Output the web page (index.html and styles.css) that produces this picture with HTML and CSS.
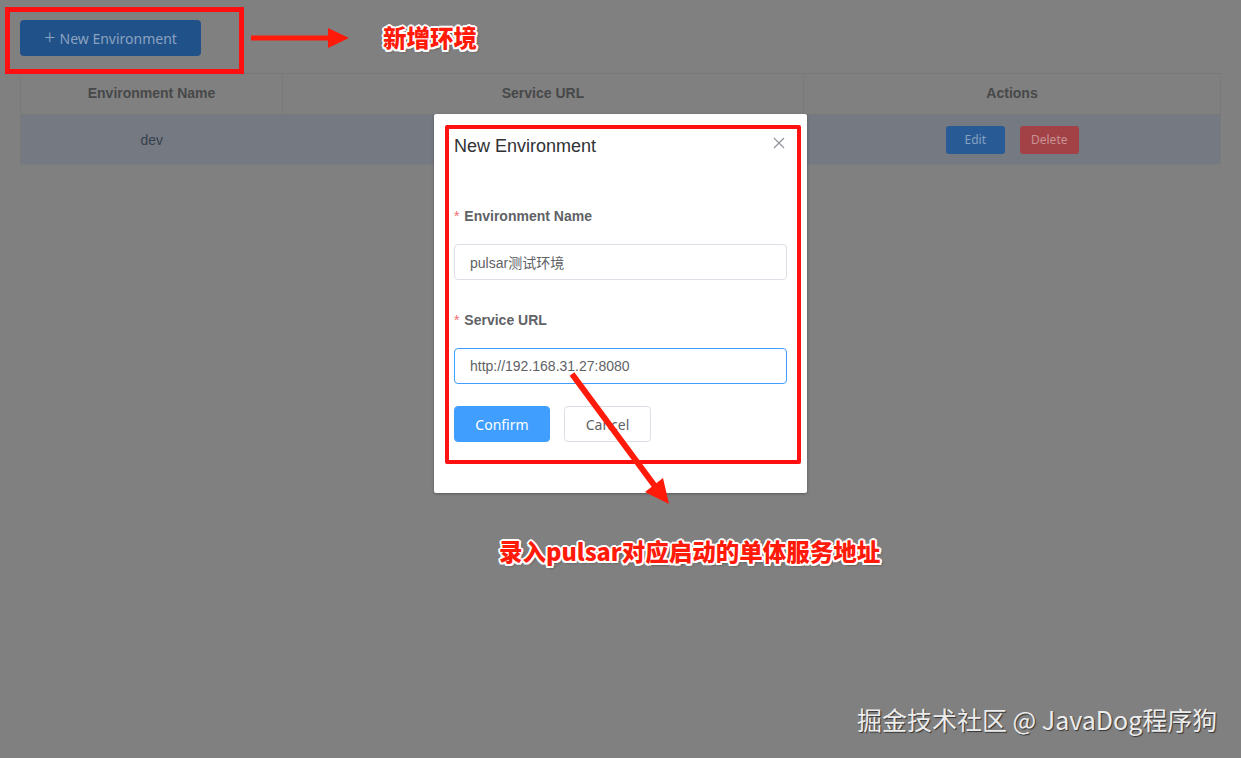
FILE: index.html
```html
<!DOCTYPE html>
<html lang="en">
<head>
  <meta charset="UTF-8">
  <meta name="viewport" content="width=device-width, initial-scale=1.0">
  <title>Environments</title>
  <link rel="stylesheet" href="styles.css">
</head>
<body>

  <!-- page behind the mask -->
  <div class="page">
    <div class="toolbar">
      <button class="btn-new"><span class="plus">+</span> New Environment</button>
    </div>

    <table class="env-table">
      <thead>
        <tr>
          <th class="col-name">Environment Name</th>
          <th class="col-url">Service URL</th>
          <th class="col-actions">Actions</th>
        </tr>
      </thead>
      <tbody>
        <tr>
          <td>dev</td>
          <td></td>
          <td>
            <div class="row-actions">
              <button class="btn-mini btn-edit">Edit</button>
              <button class="btn-mini btn-delete">Delete</button>
            </div>
          </td>
        </tr>
      </tbody>
    </table>
  </div>

  <!-- dialog -->
  <div class="dialog">
    <div class="dialog-header">
      <span class="dialog-title">New Environment</span>
      <svg class="dialog-close" width="12" height="12" viewBox="0 0 12 12">
        <path d="M1 1 L11 11 M11 1 L1 11" stroke="#909399" stroke-width="1.2" fill="none"/>
      </svg>
    </div>

    <div class="dialog-body">
      <div class="form-item">
        <label class="form-label"><span class="req">*</span> Environment Name</label>
        <input class="form-input" type="text" value="pulsar测试环境">
      </div>
      <div class="form-item">
        <label class="form-label"><span class="req">*</span> Service URL</label>
        <input class="form-input focused" type="text" value="http://192.168.31.27:8080">
      </div>
      <div class="form-buttons">
        <button class="btn btn-primary">Confirm</button>
        <button class="btn btn-plain">Cancel</button>
      </div>
    </div>
  </div>

  <!-- annotations drawn over the screenshot -->
  <div class="mark mark-top"></div>
  <div class="mark mark-dialog"></div>

  <svg class="arrows" width="1241" height="758" viewBox="0 0 1241 758">
    <line x1="251" y1="38" x2="332" y2="38" stroke="#ff1a0a" stroke-width="5"/>
    <polygon points="328,28 349,38 328,48" fill="#ff1a0a"/>
    <line x1="572" y1="374" x2="657" y2="489" stroke="#ff1a0a" stroke-width="6"/>
    <polygon points="645,492 669,504 663,478" fill="#ff1a0a"/>
  </svg>

  <div class="note note-top">新增环境</div>
  <div class="note note-bottom">录入pulsar对应启动的单体服务地址</div>

  <div class="watermark">掘金技术社区 @ JavaDog程序狗</div>

</body>
</html>
```

FILE: styles.css
```css
body {
  margin: 0;
  background-color: #808080;
  font-family: 'Liberation Sans', Arial, 'Noto Sans CJK SC', sans-serif;
  width: 1241px;
  height: 758px;
  overflow: hidden;
  position: relative;
}

.page {
  padding: 20px;
}

/* toolbar */
.toolbar {
  height: 36px;
}

.btn-new {
  width: 181px;
  height: 36px;
  border: none;
  border-radius: 4px;
  background-color: #215189;
  color: #8aa3c0;
  font-family: 'Noto Sans', 'Liberation Sans', sans-serif;
  font-size: 14px;
  padding: 0;
  display: flex;
  align-items: center;
  justify-content: center;
  gap: 4px;
}

.btn-new .plus {
  font-size: 20px;
  font-weight: 300;
  line-height: 1;
  margin-top: -2px;
}

/* table */
.env-table {
  margin-top: 17px;
  width: 1201px;
  border-collapse: collapse;
  table-layout: fixed;
  border-top: 1px solid #787878;
  border-left: 1px solid #7a7a7a;
  border-right: 1px solid #7a7a7a;
}

.env-table th {
  height: 38px;
  font-size: 14px;
  font-weight: bold;
  color: #474849;
  border-right: 1px solid #7a7a7a;
  border-bottom: 1px solid #787878;
  padding: 0 0 2px;
}

.env-table th:last-child {
  border-right: none;
}

.col-name { width: 261px; }
.col-url { width: 520px; }

.env-table td {
  height: 49px;
  background-color: #757a82;
  text-align: center;
  font-size: 14px;
  color: #38404b;
  padding: 0;
  border-bottom: 1px solid #7a7c80;
}

.row-actions {
  display: flex;
  justify-content: center;
  gap: 15px;
  padding-left: 1px;
}

.btn-mini {
  width: 59px;
  height: 28px;
  border: none;
  border-radius: 3px;
  font-family: 'Noto Sans', 'Liberation Sans', sans-serif;
  font-size: 12px;
  padding: 0;
}

.btn-edit {
  background-color: #285b96;
  color: #86a1c0;
}

.btn-delete {
  background-color: #a34246;
  color: #c79496;
}

/* dialog */
.dialog {
  position: absolute;
  left: 434px;
  top: 114px;
  width: 373px;
  height: 379px;
  background-color: #fff;
  border-radius: 2px;
  box-shadow: 0 1px 3px rgba(0, 0, 0, 0.3);
  box-sizing: border-box;
}

.dialog-header {
  padding: 20px 20px 0;
  display: flex;
  justify-content: space-between;
  align-items: flex-start;
}

.dialog-title {
  font-size: 18px;
  line-height: 24px;
  color: #303133;
}

.dialog-close {
  margin-top: 3px;
  margin-right: 2px;
}

.dialog-body {
  padding: 48px 20px 0;
}

.form-item {
  margin-bottom: 30px;
}

.form-item:nth-child(2) {
  margin-bottom: 22px;
}

.form-label {
  display: block;
  font-size: 14px;
  line-height: 20px;
  font-weight: bold;
  color: #606266;
  margin-bottom: 18px;
}

.req {
  color: #f56c6c;
  font-weight: normal;
  margin-right: 1px;
}

.form-input {
  display: block;
  width: 333px;
  height: 36px;
  box-sizing: border-box;
  border: 1px solid #dcdfe6;
  border-radius: 4px;
  padding: 0 15px;
  font-family: 'Liberation Sans', Arial, 'Noto Sans CJK SC', sans-serif;
  font-size: 14px;
  color: #606266;
  outline: none;
}

.form-input.focused {
  border-color: #409eff;
}

.form-buttons {
  display: flex;
  gap: 14px;
}

.btn {
  height: 36px;
  border-radius: 4px;
  font-family: 'Noto Sans', 'Liberation Sans', sans-serif;
  font-size: 14px;
  padding: 0;
}

.btn-primary {
  width: 96px;
  background-color: #409eff;
  border: 1px solid #409eff;
  color: #fff;
}

.btn-plain {
  width: 87px;
  background-color: #fff;
  border: 1px solid #dcdfe6;
  color: #606266;
}

/* annotations */
.mark {
  position: absolute;
  border: 5px solid #ff1010;
  box-sizing: border-box;
}

.mark-top {
  left: 5px;
  top: 7px;
  width: 239px;
  height: 67px;
}

.mark-dialog {
  left: 445px;
  top: 125px;
  width: 356px;
  height: 339px;
  border-width: 4px;
  border-radius: 2px;
}

.arrows {
  position: absolute;
  left: 0;
  top: 0;
}

.note {
  position: absolute;
  font-family: 'Noto Sans CJK SC', sans-serif;
  font-weight: 900;
  font-size: 23.5px;
  line-height: 30px;
  color: #ff1a0a;
  text-shadow:
    2px 0 0 #fff, -2px 0 0 #fff, 0 2px 0 #fff, 0 -2px 0 #fff,
    1.5px 1.5px 0 #fff, -1.5px 1.5px 0 #fff, 1.5px -1.5px 0 #fff, -1.5px -1.5px 0 #fff,
    2px 2px 3px rgba(0, 0, 0, 0.4);
  white-space: nowrap;
}

.note-top {
  left: 383px;
  top: 22px;
}

.note-bottom {
  left: 499px;
  top: 536px;
}

.watermark {
  position: absolute;
  left: 857px;
  top: 701px;
  font-family: 'Noto Sans CJK SC', sans-serif;
  font-size: 25px;
  line-height: 36px;
  color: #ececec;
  text-shadow: 1px 1px 1px #333;
  white-space: nowrap;
}
```
